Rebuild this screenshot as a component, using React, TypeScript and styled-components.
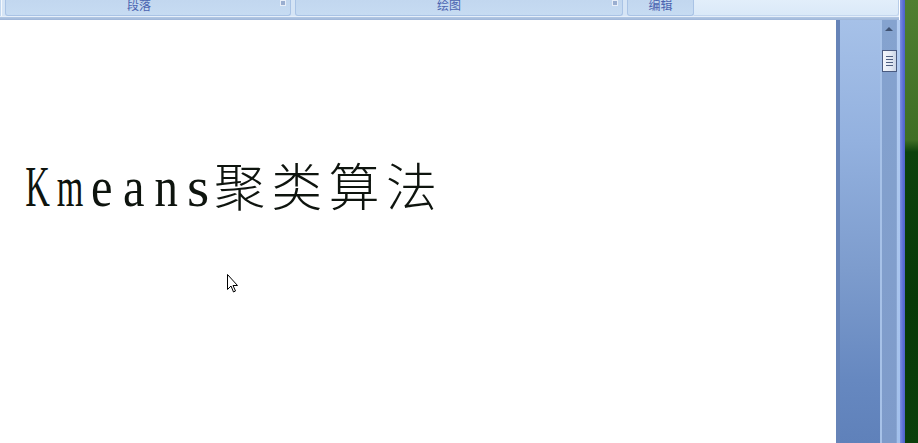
import React from "react";
import styled, { createGlobalStyle } from "styled-components";

const Global = createGlobalStyle`
  html, body { margin: 0; padding: 0; overflow: hidden; background: #fff; }
  #root { width: 918px; height: 443px; }
`;

const Screen = styled.div`
  display: flex;
  width: 918px;
  height: 443px;
  overflow: hidden;
`;

const Window = styled.div`
  display: flex;
  width: 905px;
  height: 100%;
`;

const Content = styled.div`
  display: flex;
  flex-direction: column;
  width: 900px;
  height: 100%;
`;

const Frame = styled.div`
  width: 5px;
  background: linear-gradient(90deg, #7c8fe0 0, #5b6fd6 60%, #4d61c9 100%);
`;

const Desktop = styled.div`
  flex: 1;
  background: linear-gradient(180deg, #4f7f31 0, #3f6e25 140px, #0d420c 152px, #073907 300px, #0b3f0b 100%);
`;

const Ribbon = styled.div`
  display: flex;
  flex-direction: column;
  height: 20px;
  width: 899px;
  flex-shrink: 0;
`;

const GroupRow = styled.div`
  display: flex;
  height: 16px;
  background: #d5e4f5;
  gap: 4px;
`;

const Stub = styled.div`
  width: 1px;
  background: #c2d7ef;
  border-right: 1px solid #f4f8fd;
  margin-right: -1px;
`;

const Group = styled.div<{ $w: number; $shift?: number }>`
  position: relative;
  width: ${(p) => p.$w}px;
  box-sizing: border-box;
  background: linear-gradient(180deg, #c2d7ef 0, #c6dbf2 100%);
  border: 1px solid #a9c3e5;
  border-top: none;
  border-radius: 0 0 3px 3px;
  display: flex;
  justify-content: center;
  padding-right: ${(p) => p.$shift ?? 0}px;
  overflow: hidden;
`;

const GroupLabel = styled.span`
  font-family: "Noto Sans CJK SC", sans-serif;
  font-size: 12px;
  line-height: 12px;
  margin-top: -1px;
  color: #4a64b0;
`;

const Launcher = styled.span`
  position: absolute;
  right: 4px;
  top: 0px;
  width: 6px;
  height: 6px;
  box-sizing: border-box;
  border: 1px solid #e7eef8;
  background: #9aaed0;
`;

const Filler = styled.div`
  flex: 1;
  background: linear-gradient(180deg, #e2eefa 0, #dae9f8 100%);
  border-right: 1px solid #b8cde8;
  border-bottom: 1px solid #c3d6ee;
  border-radius: 0 0 3px 0;
  margin-left: -4px;
`;

const RibbonBottom = styled.div`
  height: 4px;
  background: linear-gradient(180deg, #e6effa 0, #e6effa 25%, #b3c8e4 25%, #9db5d8 100%);
`;

const Body = styled.div`
  flex: 1;
  display: flex;
  min-height: 0;
`;

const Document = styled.div`
  position: relative;
  width: 836px;
  background: #fff;
  padding-top: 124px;
  padding-left: 22px;
  box-sizing: border-box;
`;

const Title = styled.div`
  display: flex;
  align-items: baseline;
  height: 80px;
  color: #0e140e;
`;

const LatinCell = styled.span`
  display: inline-flex;
  justify-content: center;
  width: 32px;
  font-family: "Liberation Serif", serif;
  font-size: 57px;
  line-height: 80px;
`;

const LatinGlyph = styled.span<{ $sx: number }>`
  display: inline-block;
  flex-shrink: 0;
  transform: scaleX(${(p) => p.$sx});
  transform-origin: 50% 50%;
`;

const CjkCell = styled.span`
  display: inline-block;
  width: 57.3px;
  font-family: "Noto Sans CJK SC", sans-serif;
  font-size: 51px;
  line-height: 80px;
  font-weight: 300;
`;

const Cursor = styled.svg`
  position: absolute;
  left: 227px;
  top: 254px;
`;

const Gutter = styled.div`
  width: 46px;
  background: linear-gradient(180deg, #a6c1e8 0, #93b1df 120px, #7d9ccd 250px, #6688c0 360px, #5f81ba 100%);
  border-left: 4px solid #6784b8;
  box-sizing: border-box;
  border-right: 2px solid #a7c2e8;
`;

const Scrollbar = styled.div`
  position: relative;
  width: 15px;
  background: linear-gradient(180deg, #85a3cf 0, #7e9bca 100%);
  border-right: 1px solid #8aa6d2;
  box-sizing: border-box;
`;

const UpArrow = styled.span`
  position: absolute;
  left: 3px;
  top: 7px;
  width: 0;
  height: 0;
  border-left: 4px solid transparent;
  border-right: 4px solid transparent;
  border-bottom: 4px solid #3f5272;
`;

const Thumb = styled.div`
  position: absolute;
  left: 0;
  top: 30px;
  width: 15px;
  height: 22px;
  box-sizing: border-box;
  border: 1px solid #4a5b80;
  background: linear-gradient(90deg, #f3f6fb 0, #e3eaf4 60%, #c9d4e4 100%);
  display: flex;
  flex-direction: column;
  align-items: center;
  justify-content: center;
  gap: 2px;
`;

const Grip = styled.span`
  display: block;
  width: 7px;
  height: 1px;
  background: #4e5f80;
`;

const Edge = styled.div`
  width: 3px;
  background: linear-gradient(180deg, #b3cdf1 0, #a2c0ec 100%);
`;

const latin: [string, number][] = [
  ["K", 0.6],
  ["m", 0.6],
  ["e", 0.85],
  ["a", 0.85],
  ["n", 0.82],
  ["s", 1.0],
];
const cjk = ["聚", "类", "算", "法"];

export default function App() {
  return (
    <>
      <Global />
      <Screen>
        <Window>
          <Content>
            <Ribbon>
              <GroupRow>
                <Stub />
                <Group $w={286} $shift={18}>
                  <GroupLabel>段落</GroupLabel>
                  <Launcher />
                </Group>
                <Group $w={328} $shift={20}>
                  <GroupLabel>绘图</GroupLabel>
                  <Launcher />
                </Group>
                <Group $w={67}>
                  <GroupLabel>编辑</GroupLabel>
                </Group>
                <Filler />
              </GroupRow>
              <RibbonBottom />
            </Ribbon>
            <Body>
              <Document>
                <Title>
                  {latin.map(([c, sx], i) => (
                    <LatinCell key={i}>
                      <LatinGlyph $sx={sx}>{c}</LatinGlyph>
                    </LatinCell>
                  ))}
                  {cjk.map((c, i) => (
                    <CjkCell key={i}>{c}</CjkCell>
                  ))}
                </Title>
                <Cursor width="12" height="20" viewBox="0 0 12 20">
                  <path
                    d="M0.5 0.5 L0.5 15.5 L4 12 L6.5 18 L8.5 17 L6 11.5 L10.5 11.5 Z"
                    fill="#fff"
                    stroke="#000"
                    strokeWidth="1"
                  />
                </Cursor>
              </Document>
              <Gutter />
              <Scrollbar>
                <UpArrow />
                <Thumb>
                  <Grip />
                  <Grip />
                  <Grip />
                  <Grip />
                </Thumb>
              </Scrollbar>
              <Edge />
            </Body>
          </Content>
          <Frame />
        </Window>
        <Desktop />
      </Screen>
    </>
  );
}
